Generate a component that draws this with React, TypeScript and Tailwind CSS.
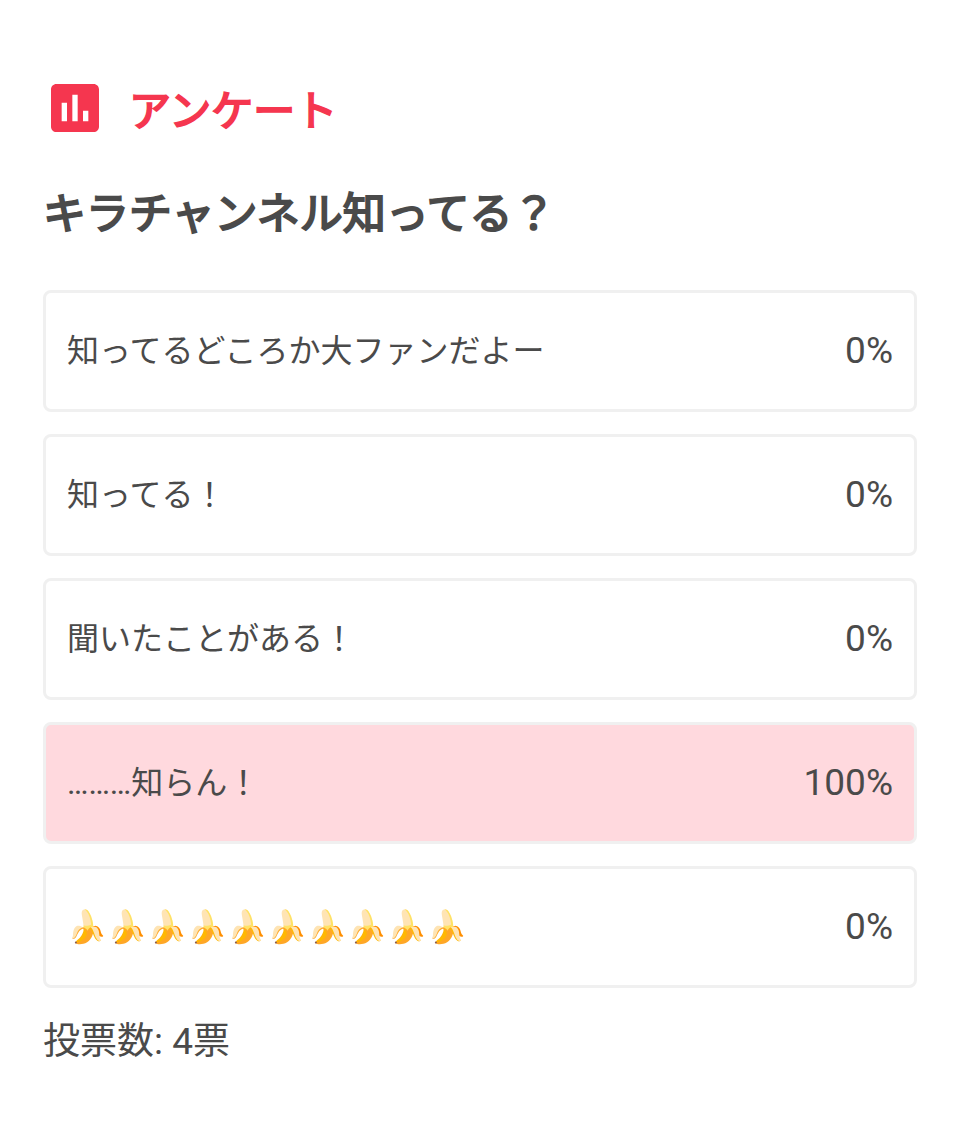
import React from 'react';

type Option = {
  label: string;
  percent: number;
};

const options: Option[] = [
  { label: '知ってるどころか大ファンだよー', percent: 0 },
  { label: '知ってる！', percent: 0 },
  { label: '聞いたことがある！', percent: 0 },
  { label: '………知らん！', percent: 100 },
  { label: '🍌🍌🍌🍌🍌🍌🍌🍌🍌🍌', percent: 0 },
];

const PollIcon = () => {
  return (
    <svg className="w-16 h-16" viewBox="0 0 24 24" fill="#f5364f" aria-hidden="true">
      <path d="M19 3H5c-1.1 0-2 .9-2 2v14c0 1.1.9 2 2 2h14c1.1 0 2-.9 2-2V5c0-1.1-.9-2-2-2zM9 17H7v-7h2v7zm4 0h-2V7h2v10zm4 0h-2v-4h2v4z" />
    </svg>
  );
};

const App = () => {
  return (
    <main className="min-h-screen bg-white px-[43px] pt-19 pb-12 text-[#4a4a4a] font-[Roboto,'Noto_Sans_CJK_JP',sans-serif]">
      <div className="flex items-start gap-[22px]">
        <PollIcon />
        <p className="pt-1 text-[42px] leading-16 font-normal text-[#f5364f] [-webkit-text-stroke:2px]">アンケート</p>
      </div>
      <h1 className="mt-[38px] text-[43px] leading-16 font-normal [-webkit-text-stroke:2px]">キラチャンネル知ってる？</h1>
      <ul className="mt-11 flex flex-col gap-[22px]">
        {options.map((option) => (
          <li key={option.label}>
            <button
              className={`flex h-[122px] w-full items-center justify-between rounded-lg border-3 border-[#f0f0f0] px-[21px] ${
                option.percent > 0 ? 'bg-[#ffd9de]' : 'bg-white'
              }`}
            >
              <span className="text-[32px] leading-12">{option.label}</span>
              <span className="text-[37px] leading-12">{option.percent}%</span>
            </button>
          </li>
        ))}
      </ul>
      <p className="mt-[26px] text-[37px] leading-14">投票数: 4票</p>
    </main>
  );
};

export default App;
